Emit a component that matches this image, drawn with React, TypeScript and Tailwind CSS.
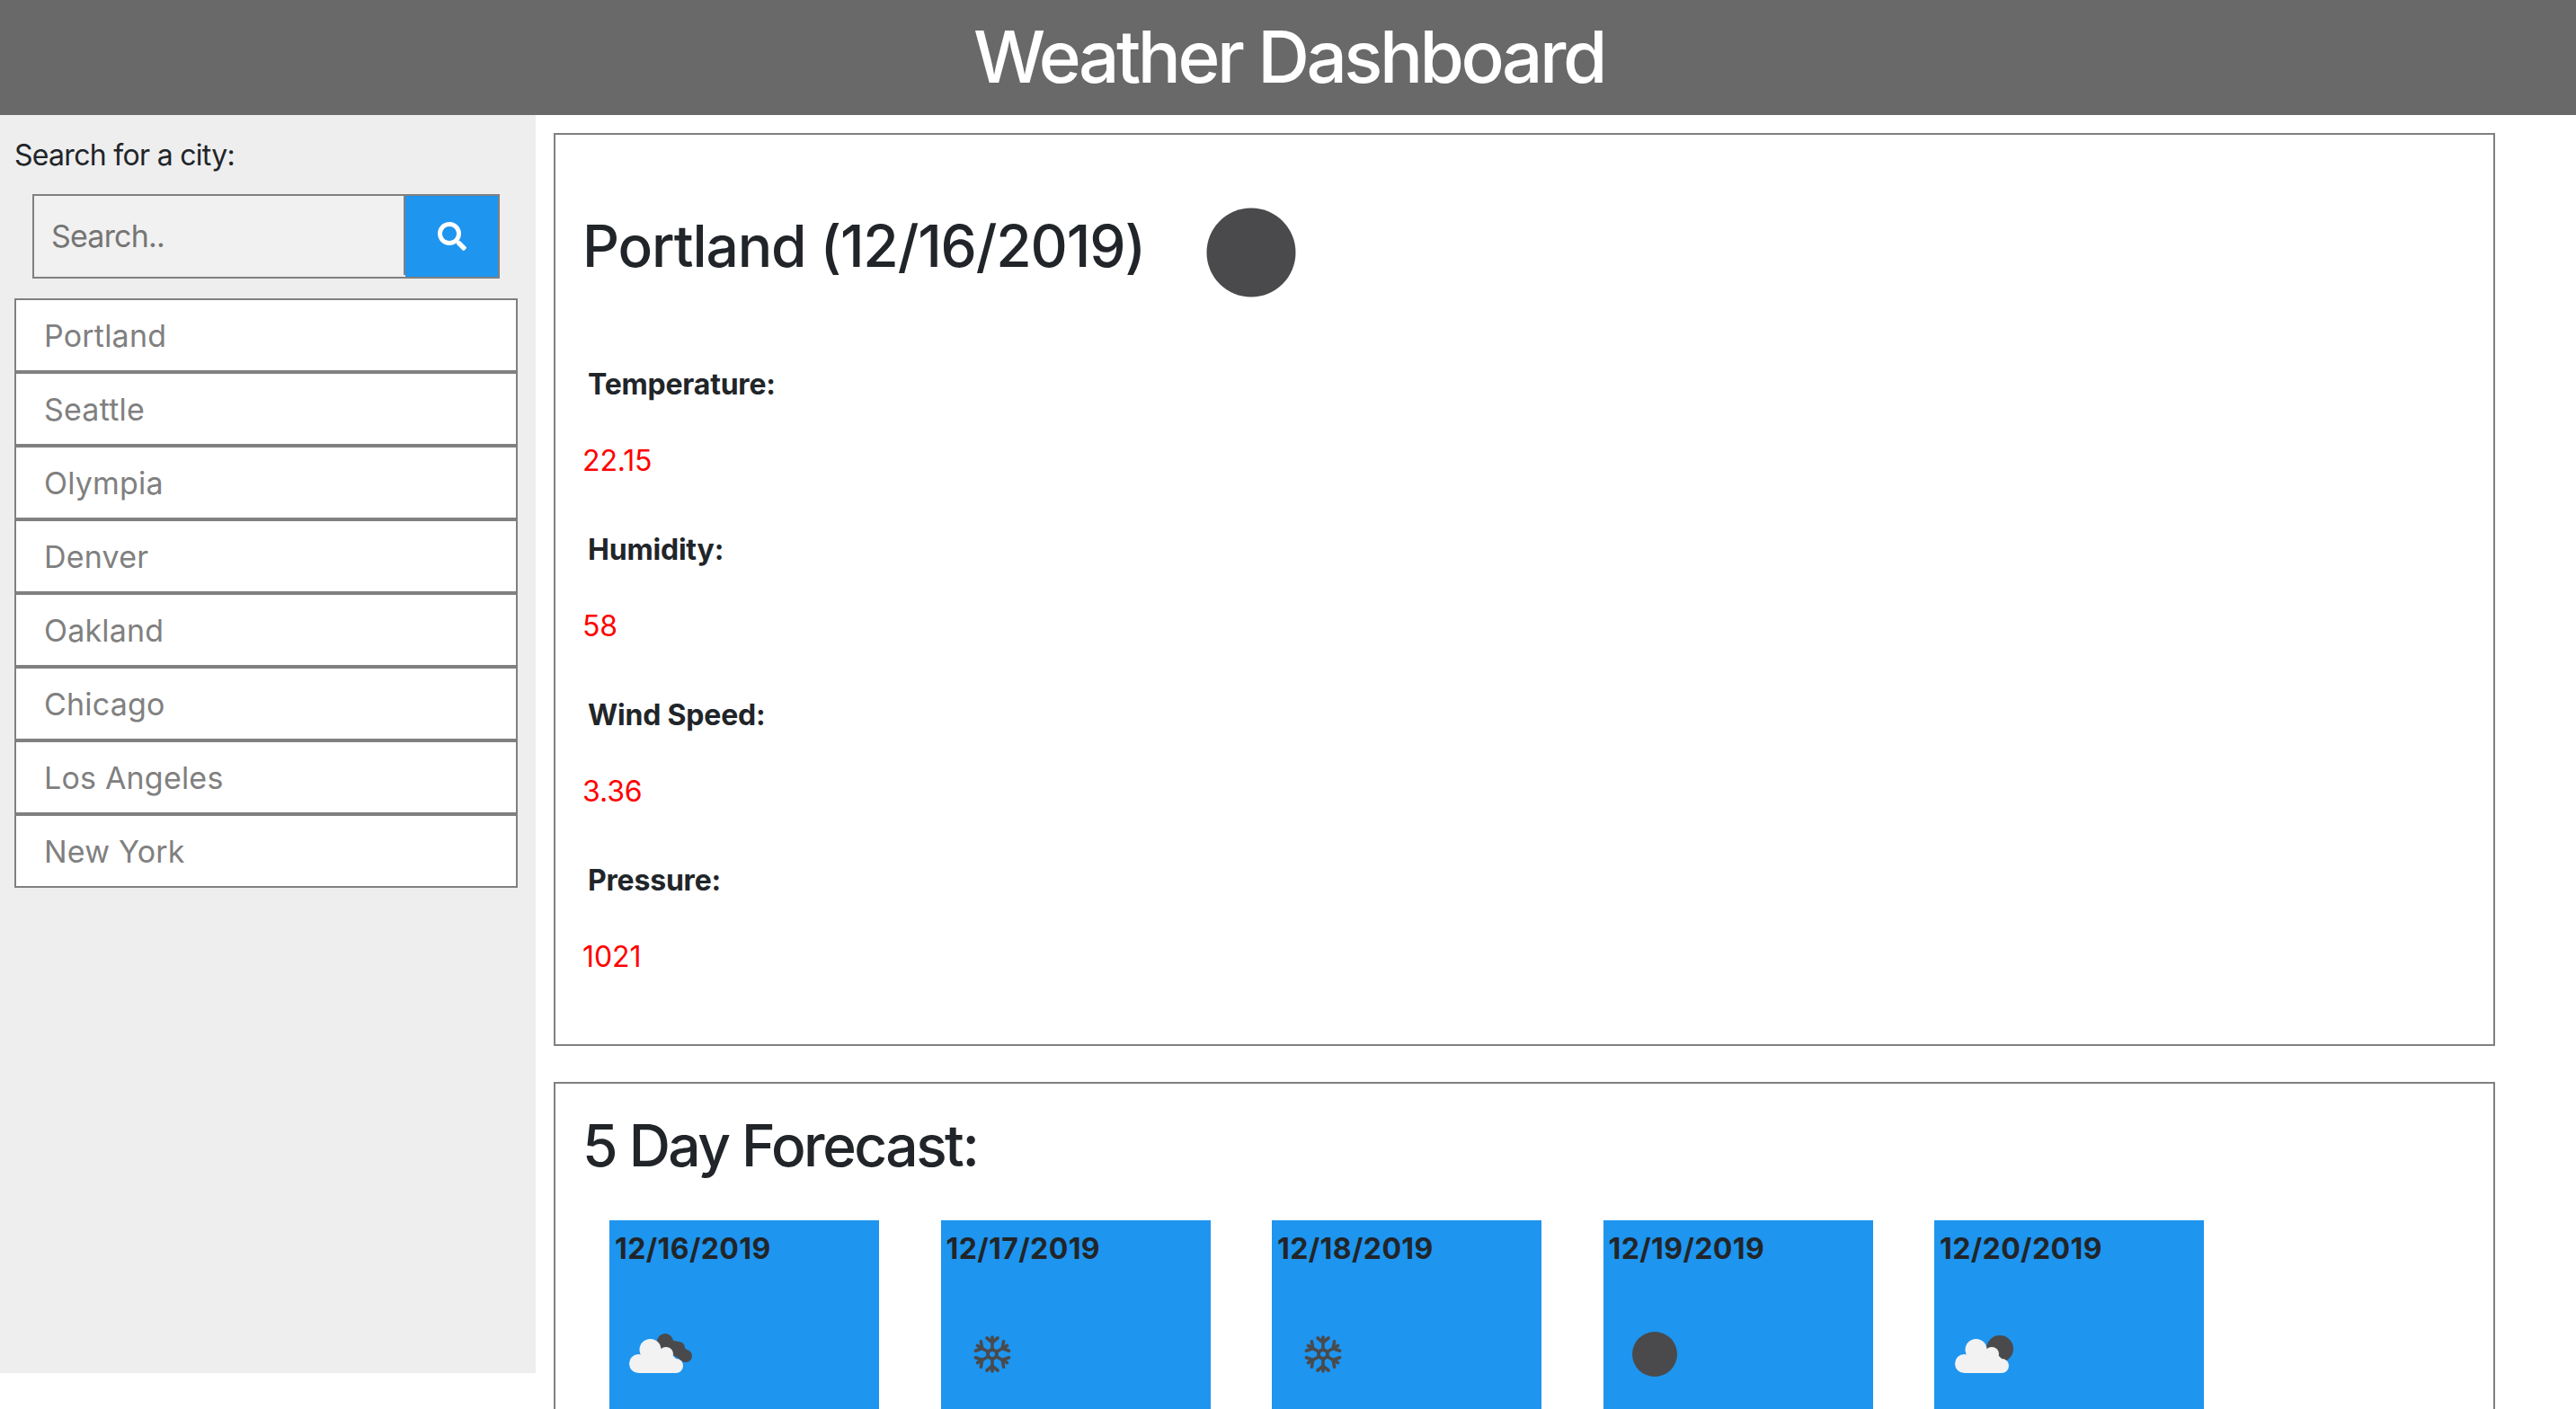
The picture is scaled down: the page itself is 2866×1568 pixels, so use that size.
import { FaSearch } from "react-icons/fa";

const CITIES = ["Portland", "Seattle", "Olympia", "Denver", "Oakland", "Chicago", "Los Angeles", "New York"];

const STATS = [
  { label: "Temperature:", value: "22.15" },
  { label: "Humidity:", value: "58" },
  { label: "Wind Speed:", value: "3.36" },
  { label: "Pressure:", value: "1021" },
];

const FORECAST = [
  { date: "12/16/2019", icon: "clouds" },
  { date: "12/17/2019", icon: "snow" },
  { date: "12/18/2019", icon: "snow" },
  { date: "12/19/2019", icon: "clear" },
  { date: "12/20/2019", icon: "few" },
];

const DARK = "#4a4a4c";
const LIGHT = "#f2f2f2";

function WhiteCloud({ dx = 0 }: { dx?: number }) {
  return (
    <g fill={LIGHT} transform={`translate(${dx} 0)`}>
      <circle cx="25.5" cy="60.5" r="10.5" />
      <circle cx="38.5" cy="45" r="12" />
      <circle cx="56" cy="50" r="8" />
      <circle cx="67" cy="63" r="8" />
      <path d="M26 71V52h38l3 3v16z" />
    </g>
  );
}

function WeatherIcon({ type, className }: { type: string; className: string }) {
  return (
    <svg viewBox="0 0 100 100" className={className}>
      {type === "clear" && <circle cx="50" cy="50" r="25" fill={DARK} />}
      {type === "few" && (
        <>
          <circle cx="66" cy="44" r="15" fill={DARK} />
          <WhiteCloud dx={1} />
        </>
      )}
      {type === "clouds" && (
        <>
          <g fill={DARK}>
            <circle cx="55" cy="36" r="9" />
            <circle cx="70" cy="43" r="7" />
            <circle cx="78" cy="52" r="7" />
            <path d="M50 32l20 4 12 12-6 11-26-18z" />
          </g>
          <WhiteCloud />
        </>
      )}
      {type === "snow" && (
        <g stroke={DARK} strokeWidth="3.6" fill="none" strokeLinecap="round">
          {[0, 60, 120, 180, 240, 300].map((deg) => (
            <g key={deg} transform={`rotate(${deg} 50 50)`}>
              <path d="M50 45V31" />
              <path d="M44 32l6 5 6-5" />
              <path d="M46.5 46.5L50 44.5L53.5 46.5" />
            </g>
          ))}
        </g>
      )}
    </svg>
  );
}

export default function App() {
  return (
    <div className="h-[1568px] overflow-hidden bg-white font-['Inter',sans-serif] text-[#212529]">
      <header className="h-[128px] bg-[#696969] flex items-center justify-center">
        <h1 className="text-[80px] leading-[96px] font-medium text-white tracking-[-3.5px] -mt-[2px] ml-[2px]">Weather Dashboard</h1>
      </header>

      <div className="flex items-start">
        {/* sidebar */}
        <aside className="w-[596px] h-[1400px] shrink-0 bg-[#eeeeee] pl-4 pr-5 pt-[21px]">
          <p className="text-[32px] leading-[48px] tracking-[-0.7px]">Search for a city:</p>
          <form className="mt-[19px] mx-5 h-[94px] flex border-2 border-[#808080]">
            <input
              placeholder="Search.."
              className="w-[413px] h-[88px] bg-[#f1f1f1] border-r-2 border-[#808080] pl-[19px] text-[34px] outline-none placeholder:text-[#757575] tracking-[-0.8px]"
            />
            <button type="button" className="flex-1 bg-[#1e95ef] flex items-center justify-center text-white">
              <FaSearch className="w-8 h-8" />
            </button>
          </form>
          <ul className="mt-[22px]">
            {CITIES.map((city) => (
              <li
                key={city}
                className="h-[82px] bg-white border-2 border-[#808080] pl-[31px] flex items-center text-[34px] text-[#808080] tracking-[0.2px]"
              >
                {city}
              </li>
            ))}
          </ul>
        </aside>

        {/* main */}
        <main className="ml-5 w-[2160px] pt-5">
          <section className="h-[1016px] border-2 border-[#808080] pl-[30px] pt-[31px]">
            <div className="flex items-start mb-[22px]">
              <h2 className="text-[64px] leading-[77px] font-medium mt-[54px] tracking-[-1.13px]">Portland (12/16/2019)</h2>
              <WeatherIcon type="clear" className="ml-[19px] w-[198px] h-[198px] mt-px" />
            </div>
            {STATS.map((s) => (
              <div key={s.label} className="pt-[2px] mb-[49px]">
                <p className="text-[32px] leading-[48px] font-bold ml-[6px] mb-[37px] tracking-[-0.2px]">{s.label}</p>
                <p className="text-[32px] leading-[48px] text-[#ff0000] tracking-[-0.1px]">{s.value}</p>
              </div>
            ))}
          </section>

          <section className="mt-[40px] h-[600px] border-2 border-[#808080] pl-[30px] pt-[30px]">
            <h2 className="text-[64px] leading-[77px] font-medium tracking-[-2.5px]">5 Day Forecast:</h2>
            <div className="mt-[45px] ml-[30px] flex gap-[68.5px]">
              {FORECAST.map((d) => (
                <div key={d.date} className="w-[300px] h-[400px] bg-[#1e95ef] pt-[8px] pl-[6px]">
                  <p className="text-[32px] leading-[48px] font-bold tracking-[0.4px]">{d.date}</p>
                  <WeatherIcon type={d.icon} className="mt-[43px] ml-px w-[100px] h-[100px]" />
                </div>
              ))}
            </div>
          </section>
        </main>
      </div>
    </div>
  );
}
